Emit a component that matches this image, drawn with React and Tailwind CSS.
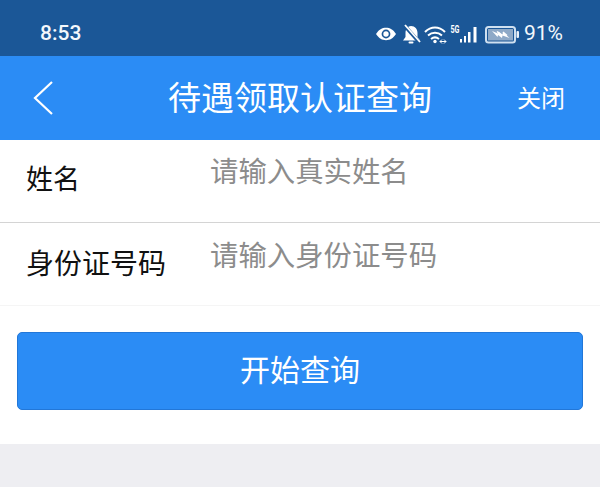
const cjk = { fontFamily: '"Noto Sans CJK SC", sans-serif' }

function StatusIcons() {
  return (
    <svg width="145" height="24" viewBox="0 0 145 24" className="block">
      {/* eye */}
      <path d="M1 12C4 7.500 7 5.800 11 5.800s7 1.700 10 6.200c-3 4.500-6 6.200-10 6.200S4 16.500 1 12z" fill="#fff" />
      <circle cx="11" cy="12" r="4.400" fill="#1b5797" />
      <circle cx="11" cy="12" r="2.700" fill="#fff" />
      {/* muted bell */}
      <path d="M36 4c4 0 6.500 3 6.500 7v4l2.500 3.500H28l2.500-3.500v-4c0-4 2.500-7 5.500-7z" fill="#fff" />
      <rect x="33.500" y="19.500" width="5" height="2" rx="1" fill="#fff" />
      <path d="M29 3l15 17" stroke="#1b5797" strokeWidth="3.500" />
      <path d="M30 3l15 17" stroke="#fff" strokeWidth="1.800" />
      {/* wifi */}
      <path d="M50 10c6-6 14-6 20 0" fill="none" stroke="#fff" strokeWidth="2" />
      <path d="M53 13.500c4.200-3.600 9.800-3.600 14 0" fill="none" stroke="#fff" strokeWidth="2" />
      <path d="M56 17c2.500-2 5.500-2 8 0" fill="none" stroke="#fff" strokeWidth="2" />
      <circle cx="60" cy="19.500" r="1.700" fill="#fff" />
      <path d="M65 19.500h6M67 17.500l-2 2 2 2M69 17.500l2 2-2 2" fill="none" stroke="#fff" strokeWidth="1" />
      {/* signal */}
      <text x="75.500" y="10.500" fill="#fff" fontSize="10" fontWeight="700" fontFamily="Roboto, sans-serif" textLength="9" lengthAdjust="spacingAndGlyphs">5G</text>
      <rect x="85" y="17" width="2" height="3.500" fill="#fff" />
      <rect x="89" y="14" width="2" height="6.500" fill="#fff" />
      <rect x="93" y="10" width="2.500" height="10.500" fill="#fff" />
      <rect x="98.500" y="5" width="3" height="15.500" fill="#fff" />
      {/* battery */}
      <rect x="111" y="5" width="29" height="15.500" rx="2.500" fill="none" stroke="#cfe0f0" strokeWidth="2" />
      <rect x="113" y="7" width="25" height="11.500" fill="#8ea9c7" />
      <rect x="141.500" y="9" width="2.500" height="7" rx="1" fill="#e8f0f8" />
      {/* double bolt */}
      <path d="M117 9l6 2.500 0.500-2 4 3 0.500-2.500 6.500 6-7-2.500-0.500 2.500-4-3-0.500 2z" fill="#fff" />
      <path d="M122 9.500l4 3.500M128 10l4 3.500" stroke="#fff" strokeWidth="1.500" />
    </svg>
  )
}

function Field({ label, placeholder, height, labelClass, hintClass }) {
  return (
    <div className={`flex ${height} pl-[26px]`}>
      <div className={`w-[184px] leading-[36px] text-[#111] ${labelClass}`}>{label}</div>
      <div className={`text-[28.400px] leading-[36px] text-[#8c8c8c] ${hintClass}`}>{placeholder}</div>
    </div>
  )
}

export default function App() {
  return (
    <div className="w-[600px] h-[487px] overflow-hidden bg-[#eeeef2]" style={cjk}>
      <div className="h-[56px] bg-[#1b5797] flex items-center justify-between pl-[40px] pr-[37px] pt-[12px]">
        <span className="text-[21px] text-[#f4f8fc] font-medium" style={{ fontFamily: 'Roboto, sans-serif' }}>8:53</span>
        <div className="flex items-center gap-[4px]">
          <StatusIcons />
          <span className="text-[21px] text-[#f4f8fc]" style={{ fontFamily: 'Roboto, sans-serif' }}>91%</span>
        </div>
      </div>

      <div className="h-[84px] bg-[#2b8cf5] flex items-center relative">
        <svg width="24" height="38" viewBox="0 0 24 38" className="ml-[32px]">
          <path d="M20 3L3 19l17 16" fill="none" stroke="#fff" strokeWidth="2.200" />
        </svg>
        <div className="absolute left-[168px] top-[18px] text-[33px] leading-[44px] text-white whitespace-nowrap">待遇领取认证查询</div>
        <div className="absolute left-[517px] top-[24px] text-[24px] leading-[34px] text-white whitespace-nowrap">关闭</div>
      </div>

      <div className="bg-white">
        <Field label="姓名" placeholder="请输入真实姓名" height="h-[83px] border-b border-[#d4d4d4]" labelClass="text-[27px] pt-[20px]" hintClass="pt-[12px]" />
        <Field label="身份证号码" placeholder="请输入身份证号码" height="h-[83px] border-b border-[#f5f5f5]" labelClass="text-[28px] pt-[21px]" hintClass="pt-[13px]" />
        <div className="h-[138px] px-[17px] pt-[26px]">
          <button className="w-[566px] h-[78px] pb-[6px] bg-[#2b8cf5] border border-[#2277d8] rounded-[5px] text-white text-[30px] leading-[40px]">开始查询</button>
        </div>
      </div>
    </div>
  )
}
